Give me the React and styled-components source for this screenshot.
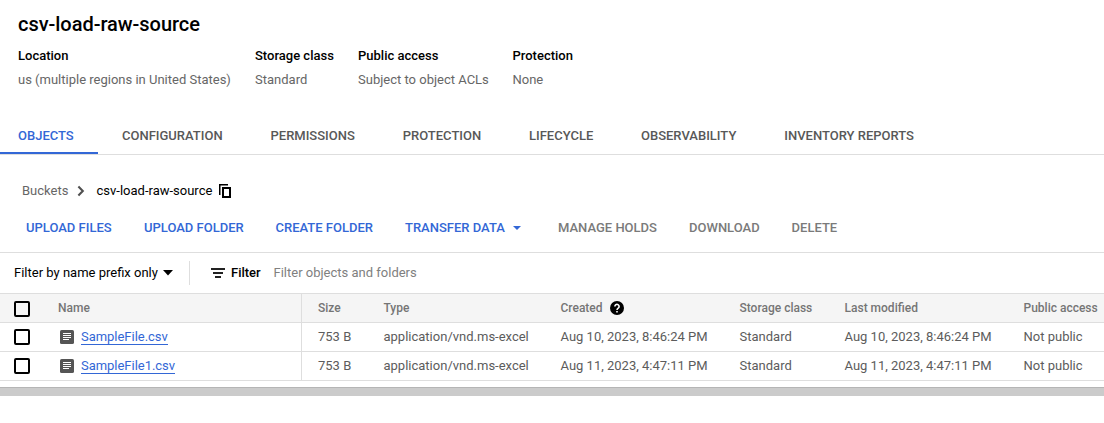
import React from 'react';
import styled, { createGlobalStyle, css } from 'styled-components';

const GlobalStyle = createGlobalStyle`
  * { box-sizing: border-box; }
  body {
    margin: 0;
    background: #fff;
    color: #000;
    font-family: Roboto, "Liberation Sans", sans-serif;
    font-size: 13px;
    line-height: 20px;
    overflow: hidden;
  }
`;

const Page = styled.main`
  display: flex;
  flex-direction: column;
`;

const Header = styled.header`
  padding: 10px 18px 0;
  height: 117px;
`;

const Title = styled.h1`
  margin: 0;
  font-size: 20px;
  font-weight: 500;
  line-height: 28px;
  letter-spacing: -0.04px;
`;

const Details = styled.dl`
  display: flex;
  margin: 8px 0 0;
`;

const Detail = styled.div`
  flex: none;
  width: ${(p) => p.$width}px;
`;

const DetailName = styled.dt`
  font-weight: 500;
`;

const DetailValue = styled.dd`
  margin: 4px 0 0;
  color: #666;
`;

const Tabs = styled.nav`
  display: flex;
  height: 38px;
  border-bottom: 1px solid #dedede;
`;

const Tab = styled.a`
  flex: none;
  width: ${(p) => p.$width}px;
  padding: 9px 0 0 ${(p) => (p.$active ? 18 : 24)}px;
  font-weight: 500;
  color: ${(p) => (p.$active ? '#3367d6' : '#585858')};
  border-bottom: 2px solid ${(p) => (p.$active ? '#3367d6' : 'transparent')};
  white-space: nowrap;
`;

const Breadcrumb = styled.div`
  display: flex;
  align-items: center;
  height: 52px;
  padding: 20px 22px 0;
`;

const Parent = styled.span`
  width: 55px;
  color: #666;
`;

const Current = styled.span`
  width: 122.5px;
  margin-left: 11.5px;
`;

const Toolbar = styled.div`
  display: flex;
  height: 46px;
  padding: 11px 0 0 26px;
  border-bottom: 1px solid #dedede;
`;

const Action = styled.button`
  display: flex;
  flex: none;
  align-items: center;
  width: ${(p) => p.$width}px;
  height: 20px;
  padding: 0;
  border: 0;
  background: none;
  font: inherit;
  font-weight: 500;
  color: ${(p) => (p.$disabled ? '#7a7a7a' : '#3367d6')};
  white-space: nowrap;

  svg { margin-left: 8px; }
`;

const FilterBar = styled.div`
  display: flex;
  align-items: center;
  height: 40px;
  padding-left: 14px;
`;

const PrefixFilter = styled.div`
  display: flex;
  align-items: center;
  width: 176px;
  height: 24px;
  border-right: 1px solid #dedede;
  white-space: nowrap;

  svg { margin-left: 5px; }
`;

const FilterLabel = styled.div`
  display: flex;
  align-items: center;
  gap: 6px;
  width: 62.5px;
  margin-left: 21px;
  font-weight: 500;
`;

const FilterHint = styled.span`
  color: #808080;
`;

const Row = styled.div`
  display: grid;
  grid-template-columns: 58px 244px 16px 65.5px 177px 179px 105px 179px 80.5px;
  height: 29px;
  border-bottom: 1px solid #dedede;
  color: #5c5c5c;
  ${(p) => p.$head && css`
    height: 30px;
    background: #f5f5f5;
    border-top: 1px solid #dedede;
    color: #757575;
    font-size: 12px;
    font-weight: 500;
  `}
`;

const Cell = styled.div`
  display: flex;
  align-items: center;
  white-space: nowrap;
`;

const CheckCell = styled(Cell)`
  padding-left: 14px;
`;

const NameCell = styled(Cell)`
  padding-left: ${(p) => (p.$head ? 0 : 2)}px;
  border-right: 1px solid #dedede;
`;

const Checkbox = styled.span`
  width: 16px;
  height: 16px;
  margin-top: ${(p) => (p.$head ? 2 : 0)}px;
  border: 2px solid #000;
  border-radius: 2px;
`;

const FileLink = styled.a`
  height: 17px;
  margin: 0 0 1px 7px;
  line-height: 17px;
  letter-spacing: -0.03px;
  color: #3367d6;
  border-bottom: 1px solid #3367d6;
`;

const Scrollbar = styled.div`
  height: 9px;
  margin-top: 6px;
  background: #cbcbcb;
  border-top: 1px solid #b5b5b5;
`;

const Chevron = () => (
  <svg width="8" height="12" viewBox="0 0 8 12" fill="none" stroke="#505050" strokeWidth="2.1">
    <path d="M1.4 1.5 5.8 6 1.4 10.5" />
  </svg>
);

const CopyIcon = () => (
  <svg width="12" height="14" viewBox="0 0 12 14" fill="none" stroke="#000">
    <path d="M.75 11V.75H9" strokeWidth="1.5" />
    <path d="M4 4h7v9H4z" strokeWidth="2" />
  </svg>
);

const Caret = ({ width, height, color }) => (
  <svg width={width} height={height} viewBox="0 0 10 5" preserveAspectRatio="none" fill={color}>
    <path d="M0 0h10L5 5z" />
  </svg>
);

const FilterIcon = () => (
  <svg width="14" height="10" viewBox="0 0 14 10" fill="#222">
    <path d="M0 0h14v2H0zM2 4h10v2H2zM4 8h6v2H4z" />
  </svg>
);

const FileIcon = () => (
  <svg width="14" height="14" viewBox="0 0 14 14">
    <rect width="14" height="14" rx="1.6" fill="#555" />
    <path d="M3 3.5h8M3 5.5h8M3 7.5h8M3 9.5h6" stroke="#fff" strokeWidth="1" />
  </svg>
);

const HelpIcon = () => (
  <svg width="14" height="14" viewBox="0 0 14 14">
    <circle cx="7" cy="7" r="7" />
    <path d="M4.9 5.5a2.1 2.1 0 1 1 3.300 1.700C7.300 7.800 7 8.100 7 9.100" fill="none" stroke="#fff" strokeWidth="1.6" />
    <path d="M6.200 10h1.600v1.600H6.200z" fill="#fff" />
  </svg>
);

const HelpSlot = styled.span`
  display: flex;
  margin-left: 7.5px;
`;

const details = [
  ['Location', 'us (multiple regions in United States)', 237],
  ['Storage class', 'Standard', 103],
  ['Public access', 'Subject to object ACLs', 154.5],
  ['Protection', 'None', 80],
];

const tabs = [
  ['OBJECTS', 98],
  ['CONFIGURATION', 148.5],
  ['PERMISSIONS', 132.2],
  ['PROTECTION', 126.3],
  ['LIFECYCLE', 112],
  ['OBSERVABILITY', 143.3],
  ['INVENTORY REPORTS', 180],
];

const actions = [
  { label: 'UPLOAD FILES', width: 118 },
  { label: 'UPLOAD FOLDER', width: 131.5 },
  { label: 'CREATE FOLDER', width: 129.5 },
  { label: 'TRANSFER DATA', width: 153, menu: true },
  { label: 'MANAGE HOLDS', width: 131, disabled: true },
  { label: 'DOWNLOAD', width: 102.6, disabled: true },
  { label: 'DELETE', width: 60, disabled: true },
];

const files = [
  { name: 'SampleFile.csv', date: 'Aug 10, 2023, 8:46:24 PM' },
  { name: 'SampleFile1.csv', date: 'Aug 11, 2023, 4:47:11 PM' },
];

export default function App() {
  return (
    <Page>
      <GlobalStyle />
      <Header>
        <Title>csv-load-raw-source</Title>
        <Details>
          {details.map(([name, value, width]) => (
            <Detail key={name} $width={width}>
              <DetailName>{name}</DetailName>
              <DetailValue>{value}</DetailValue>
            </Detail>
          ))}
        </Details>
      </Header>
      <Tabs>
        {tabs.map(([label, width], i) => (
          <Tab key={label} $width={width} $active={i === 0}>{label}</Tab>
        ))}
      </Tabs>
      <Breadcrumb>
        <Parent>Buckets</Parent>
        <Chevron />
        <Current>csv-load-raw-source</Current>
        <CopyIcon />
      </Breadcrumb>
      <Toolbar>
        {actions.map((a) => (
          <Action key={a.label} $width={a.width} $disabled={a.disabled}>
            {a.label}
            {a.menu && <Caret width={8} height={4} color="#3367d6" />}
          </Action>
        ))}
      </Toolbar>
      <FilterBar>
        <PrefixFilter>
          Filter by name prefix only
          <Caret width={10} height={5.5} color="#000" />
        </PrefixFilter>
        <FilterLabel><FilterIcon />Filter</FilterLabel>
        <FilterHint>Filter objects and folders</FilterHint>
      </FilterBar>
      <section>
        <Row $head>
          <CheckCell><Checkbox $head /></CheckCell>
          <NameCell $head>Name</NameCell>
          <Cell />
          <Cell>Size</Cell>
          <Cell>Type</Cell>
          <Cell>Created<HelpSlot><HelpIcon /></HelpSlot></Cell>
          <Cell>Storage class</Cell>
          <Cell>Last modified</Cell>
          <Cell>Public access</Cell>
        </Row>
        {files.map((f) => (
          <Row key={f.name}>
            <CheckCell><Checkbox /></CheckCell>
            <NameCell><FileIcon /><FileLink>{f.name}</FileLink></NameCell>
            <Cell />
            <Cell>753 B</Cell>
            <Cell>application/vnd.ms-excel</Cell>
            <Cell>{f.date}</Cell>
            <Cell>Standard</Cell>
            <Cell>{f.date}</Cell>
            <Cell>Not public</Cell>
          </Row>
        ))}
      </section>
      <Scrollbar />
    </Page>
  );
}
